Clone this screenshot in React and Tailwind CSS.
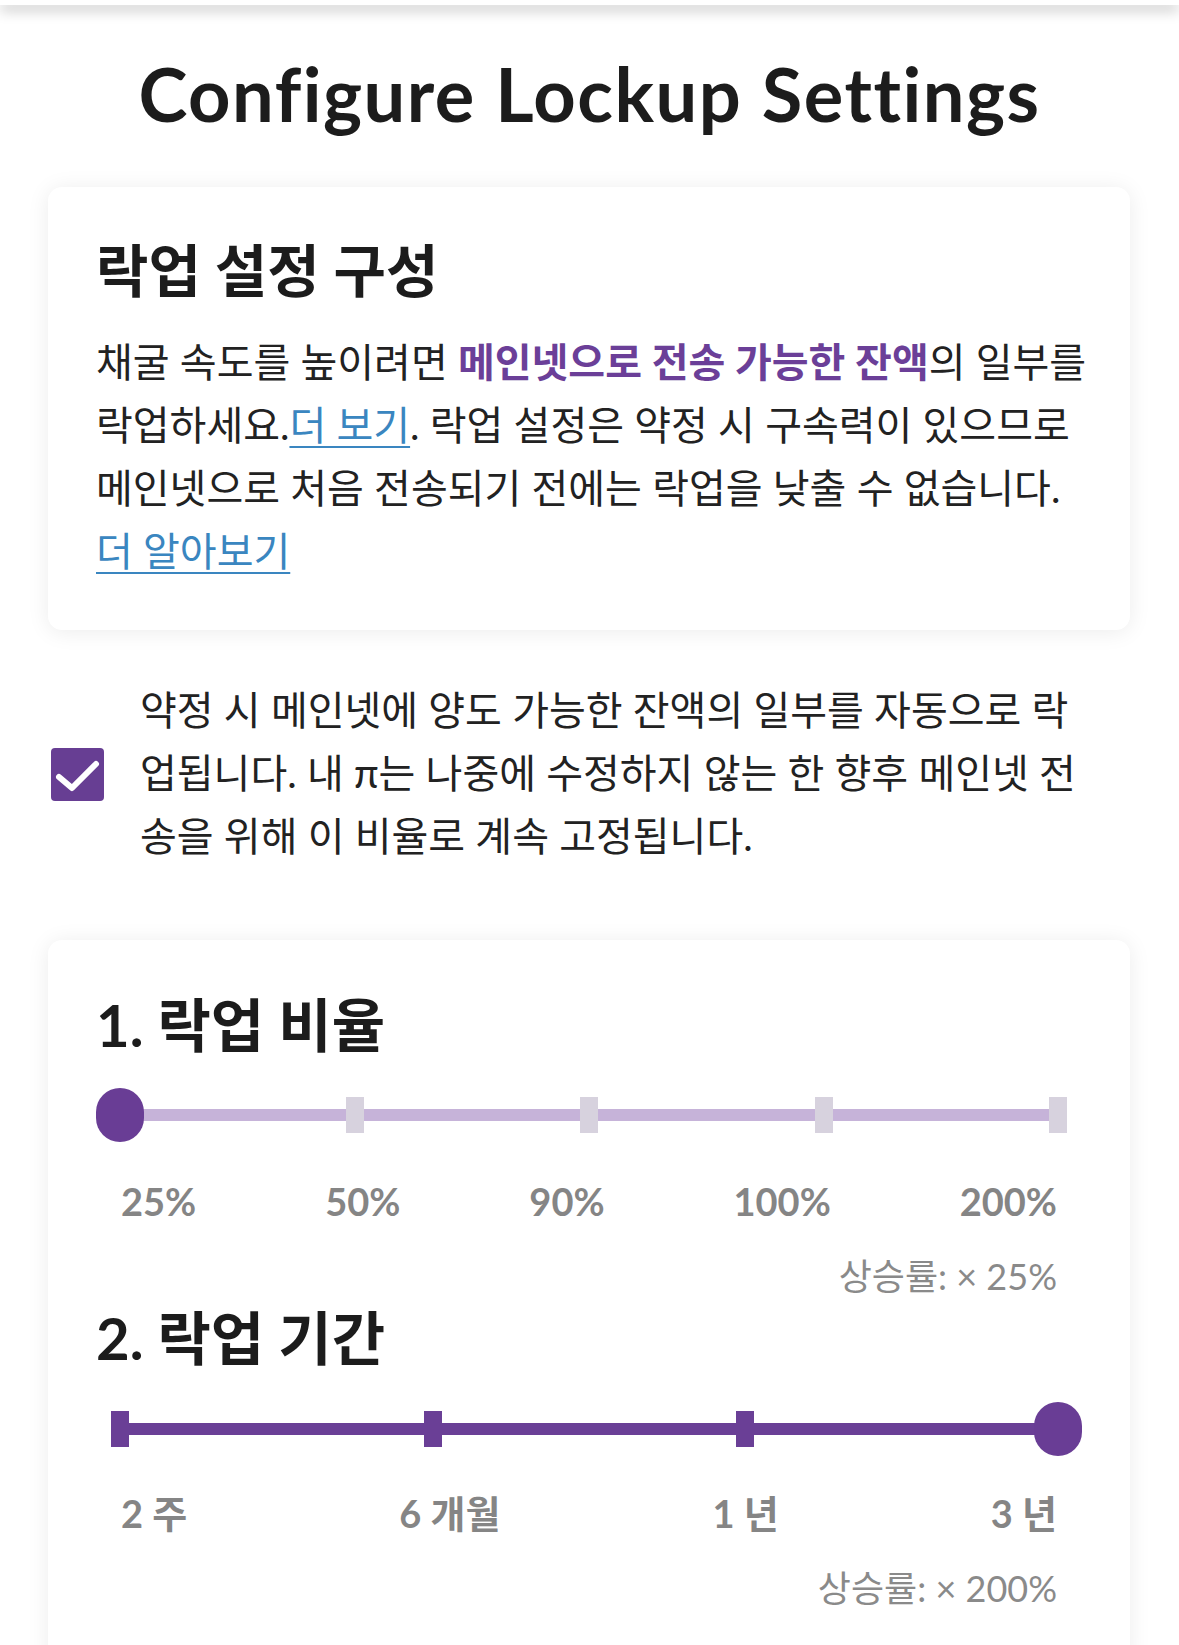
import React from "react";

const ratioStops = ["25%", "50%", "90%", "100%", "200%"];
const periodStops = ["2 주", "6 개월", "1 년", "3 년"];

const Thumb = () => (
  <div className="h-[54px] w-[48px] shrink-0 rounded-full bg-[#693d95]" />
);

const Tick = ({ filled }) => (
  <div
    className={
      filled
        ? "h-[36px] w-[18px] shrink-0 bg-[#6a3f96]"
        : "h-[36px] w-[18px] shrink-0 bg-[#d7d2de]"
    }
  />
);

// stops are spread evenly, the selected one shows the round handle
const StepSlider = ({ stops, value, filled }) => {
  return (
    <div className="relative mx-[24px] flex h-[56px] items-center justify-between">
      <div
        className={
          filled
            ? "absolute left-0 right-0 top-1/2 h-[12px] -translate-y-1/2 bg-[#6a3f96]"
            : "absolute left-0 right-0 top-1/2 h-[12px] -translate-y-1/2 bg-[#c6b3d9]"
        }
      />
      {stops.map((stop, i) => (
        <div key={stop} className="relative flex w-0 justify-center">
          {i === value ? <Thumb /> : <Tick filled={filled} />}
        </div>
      ))}
    </div>
  );
};

const StopLabels = ({ stops }) => (
  <div className="mx-[25px] flex justify-between text-[38px] font-bold leading-none text-[#858585]">
    {stops.map((stop) => (
      <span key={stop}>{stop}</span>
    ))}
  </div>
);

const Rate = ({ children }) => (
  <p className="mr-[25px] text-right text-[36px] leading-none text-[#8a8a8a]">
    {children}
  </p>
);

const App = () => {
  const [autoLock, setAutoLock] = React.useState(true);

  return (
    <div className="min-h-screen w-full bg-white font-['Lato','Noto_Sans_CJK_KR',sans-serif] text-[#222]">
      {/* app bar, mostly scrolled away */}
      <div className="relative z-10 h-[5px] bg-white shadow-[0_4px_14px_rgba(0,0,0,0.38)]" />

      <h1 className="mt-[52px] text-center text-[74px] font-bold leading-none tracking-[1.5px] text-[#1c1c1c]">
        Configure Lockup Settings
      </h1>

      {/* intro card */}
      <div className="ml-[48px] mr-[49px] mt-[56px] rounded-[14px] bg-white pb-[47px] pl-[48px] pr-[30px] pt-[55px] shadow-[0_2px_22px_rgba(0,0,0,0.08)]">
        <h2 className="text-[57px] font-bold leading-none text-[#1c1c1c]">
          락업 설정 구성
        </h2>
        <p className="mt-[32px] whitespace-nowrap text-[40px] leading-[63px]">
          채굴 속도를 높이려면{" "}
          <span className="font-bold text-[#6b3f98]">
            메인넷으로 전송 가능한 잔액
          </span>
          의 일부를
          <br />
          락업하세요.
          <a
            href="#"
            className="text-[#3a86c0] underline decoration-2 underline-offset-[6px]"
          >
            더 보기
          </a>
          . 락업 설정은 약정 시 구속력이 있으므로
          <br />
          메인넷으로 처음 전송되기 전에는 락업을 낮출 수 없습니다.
          <br />
          <a
            href="#"
            className="text-[#3a86c0] underline decoration-2 underline-offset-[6px]"
          >
            더 알아보기
          </a>
        </p>
      </div>

      {/* auto lockup checkbox */}
      <label className="ml-[51px] mt-[49px] flex cursor-pointer items-center gap-[36px]">
        <button
          type="button"
          onClick={() => setAutoLock(!autoLock)}
          className={
            autoLock
              ? "mt-[2px] flex h-[53px] w-[53px] shrink-0 items-center justify-center rounded-[4px] bg-[#673e93]"
              : "mt-[2px] flex h-[53px] w-[53px] shrink-0 items-center justify-center rounded-[4px] border-4 border-[#673e93] bg-white"
          }
        >
          {autoLock && (
            <svg width="53" height="53" viewBox="0 0 53 53">
              <polyline
                points="8,29 21,40 45,16"
                fill="none"
                stroke="#fff"
                strokeWidth="6"
                strokeLinecap="round"
                strokeLinejoin="round"
              />
            </svg>
          )}
        </button>
        <p className="whitespace-nowrap text-[40px] leading-[63px]">
          약정 시 메인넷에 양도 가능한 잔액의 일부를 자동으로 락
          <br />
          업됩니다. 내 π는 나중에 수정하지 않는 한 향후 메인넷 전
          <br />
          송을 위해 이 비율로 계속 고정됩니다.
        </p>
      </label>

      {/* ratio and period */}
      <div className="ml-[48px] mr-[49px] mt-[72px] rounded-[14px] bg-white pb-[60px] pl-[48px] pr-[48px] pt-[56px] shadow-[0_2px_22px_rgba(0,0,0,0.08)]">
        <h2 className="text-[58px] font-bold leading-none text-[#1c1c1c]">
          1. 락업 비율
        </h2>
        <div className="mt-[33px]">
          <StepSlider stops={ratioStops} value={0} filled={false} />
        </div>
        <div className="mt-[39px]">
          <StopLabels stops={ratioStops} />
        </div>
        <div className="mt-[38px]">
          <Rate>상승률: × 25%</Rate>
        </div>

        <h2 className="mt-[15px] text-[58px] font-bold leading-none text-[#1c1c1c]">
          2. 락업 기간
        </h2>
        <div className="mt-[34px]">
          <StepSlider stops={periodStops} value={3} filled={true} />
        </div>
        <div className="mt-[37px]">
          <StopLabels stops={periodStops} />
        </div>
        <div className="mt-[38px]">
          <Rate>상승률: × 200%</Rate>
        </div>
      </div>
    </div>
  );
};

export default App;
